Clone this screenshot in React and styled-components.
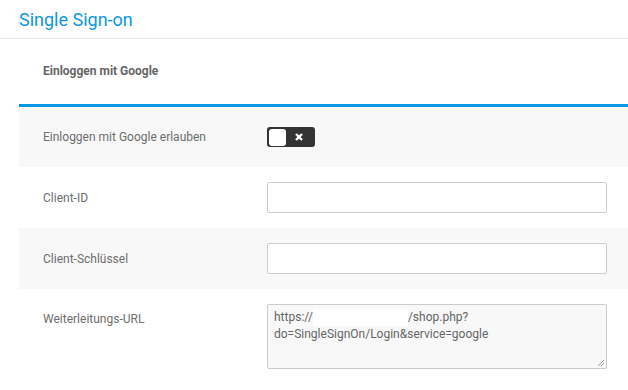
import styled, { createGlobalStyle } from 'styled-components';

const GlobalStyle = createGlobalStyle`
  html, body {
    margin: 0;
    padding: 0;
    background: #fff;
    font-family: Roboto, "Liberation Sans", Arial, sans-serif;
  }
`;

const Page = styled.div`
  width: 628px;
  height: 390px;
  overflow: hidden;
  background: #fff;
`;

const TitleBar = styled.header`
  height: 38px;
  display: flex;
  align-items: center;
  padding-left: 19px;
  border-bottom: 1px solid #e6e6e6;
`;

const Title = styled.h1`
  margin: 0;
  font-size: 18px;
  font-weight: 400;
  color: #0b97e2;
`;

const Panel = styled.section`
  margin-left: 19px;
`;

const PanelHead = styled.div`
  height: 68px;
  display: flex;
  align-items: center;
  padding: 0 0 2px 24px;
  box-sizing: border-box;
  border-bottom: 3px solid #0098e6;
  font-size: 12px;
  font-weight: 700;
  color: #666;
`;

const Row = styled.div`
  display: flex;
  align-items: ${({ $top }) => ($top ? 'flex-start' : 'center')};
  min-height: ${({ $h }) => $h || 61}px;
  padding: ${({ $top }) => ($top ? '15px' : '0')} 21px 0 24px;
  box-sizing: border-box;
  background: ${({ $shaded }) => ($shaded ? '#f8f8f8' : '#fff')};
`;

const Label = styled.label`
  width: 224px;
  flex-shrink: 0;
  font-size: 12px;
  line-height: 16px;
  color: #6e6e6e;
  margin-top: ${({ $offset }) => $offset || 0}px;
`;

const Toggle = styled.div`
  width: 48px;
  height: 20px;
  box-sizing: border-box;
  border-radius: 3px;
  background: #333;
  display: flex;
  align-items: center;
  padding-left: 2px;
`;

const Knob = styled.span`
  width: 17px;
  height: 17px;
  border-radius: 3px;
  background: #fff;
`;

const ToggleMark = styled.span`
  flex: 1;
  display: flex;
  justify-content: center;
  align-items: center;
  padding-right: 3px;
`;

const Input = styled.input`
  width: 340px;
  height: 31px;
  box-sizing: border-box;
  border: 1px solid #ccc;
  border-radius: 2px;
  background: #fff;
  padding: 4px 6px;
  font: 12px Roboto, "Liberation Sans", sans-serif;
  outline: none;
`;

const UrlBox = styled.div`
  position: relative;
  width: 340px;
  height: 65px;
  box-sizing: border-box;
  border: 1px solid #ccc;
  border-radius: 2px;
  background: #f8f8f8;
  padding: 4px 6px;
  font-size: 12px;
  line-height: 17px;
  color: #666;
`;

const Redacted = styled.span`
  display: inline-block;
  width: 95px;
  height: 17px;
  background: #fff;
  vertical-align: top;
`;

const Grip = styled.svg`
  position: absolute;
  right: 1px;
  bottom: 1px;
`;

const CrossIcon = () => (
  <svg width="8" height="8" viewBox="0 0 8 8">
    <path d="M1 1 L7 7 M7 1 L1 7" stroke="#fff" strokeWidth="2.4" strokeLinecap="butt" />
  </svg>
);

export default function App() {
  return (
    <Page>
      <GlobalStyle />
      <TitleBar>
        <Title>Single Sign-on</Title>
      </TitleBar>
      <Panel>
        <PanelHead>Einloggen mit Google</PanelHead>
        <Row $shaded $h={60}>
          <Label>Einloggen mit Google erlauben</Label>
          <Toggle>
            <Knob />
            <ToggleMark>
              <CrossIcon />
            </ToggleMark>
          </Toggle>
        </Row>
        <Row>
          <Label>Client-ID</Label>
          <Input type="text" />
        </Row>
        <Row $shaded>
          <Label>Client-Schlüssel</Label>
          <Input type="text" />
        </Row>
        <Row $top>
          <Label $offset={7}>Weiterleitungs-URL</Label>
          <UrlBox>
            https://<Redacted />/shop.php?
            <br />
            do=SingleSignOn/Login&amp;service=google
            <Grip width="8" height="8" viewBox="0 0 8 8">
              <path d="M7 1 L1 7 M7 4 L4 7" stroke="#888" strokeWidth="0.8" />
            </Grip>
          </UrlBox>
        </Row>
      </Panel>
    </Page>
  );
}
